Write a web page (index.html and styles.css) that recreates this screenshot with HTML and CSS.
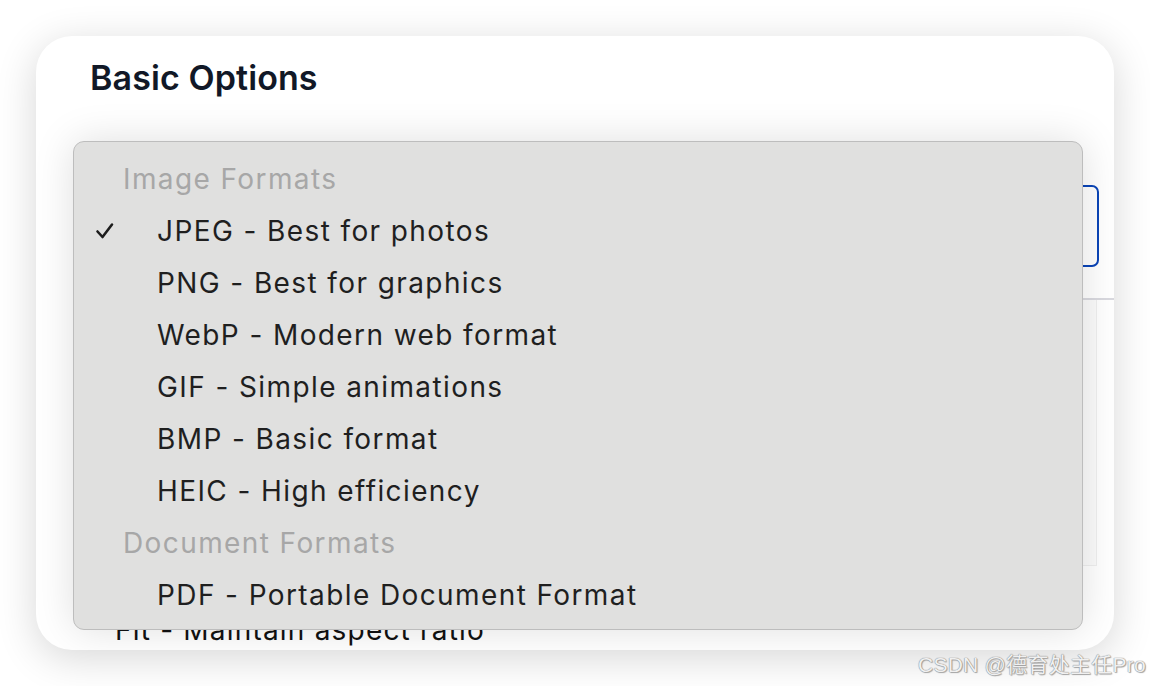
FILE: index.html
```html
<!DOCTYPE html>
<html>
<head>
<meta charset="utf-8">
<link rel="stylesheet" href="styles.css">
</head>
<body>
<div class="card">
  <h2 class="title">Basic Options</h2>
  <div class="select"></div>
  <div class="divider"></div>
  <div class="panel"></div>
  <div class="fit">Fit - Maintain aspect ratio</div>

  <div class="menu">
    <div class="group">Image Formats</div>
    <div class="item"><span class="check"><svg width="20" height="18" viewBox="0 0 20 18"><path d="M2.5 9.5 L7.5 15 L17 2.5" fill="none" stroke="#1d1d1d" stroke-width="2.6" stroke-linecap="round" stroke-linejoin="round"/></svg></span>JPEG - Best for photos</div>
    <div class="item">PNG - Best for graphics</div>
    <div class="item">WebP - Modern web format</div>
    <div class="item">GIF - Simple animations</div>
    <div class="item">BMP - Basic format</div>
    <div class="item">HEIC - High efficiency</div>
    <div class="group">Document Formats</div>
    <div class="item">PDF - Portable Document Format</div>
  </div>
</div>
<div class="watermark">CSDN @德育处主任Pro</div>
</body>
</html>
```

FILE: styles.css
```css
html, body {
  margin: 0;
  padding: 0;
  background: #ffffff;
  width: 1150px;
  height: 686px;
  overflow: hidden;
  font-family: Inter, "Noto Sans", sans-serif;
}

.card {
  position: relative;
  margin: 36px 0 0 36px;
  width: 1078px;
  height: 614px;
  border-radius: 36px;
  background: #ffffff;
  box-shadow: 0 8px 40px rgba(0, 0, 0, 0.16);
  overflow: hidden;
  box-sizing: border-box;
  padding: 22px 15px 0 52px;
}

.title {
  margin: 0 0 0 2px;
  font-size: 34px;
  font-weight: 600;
  color: #111827;
  letter-spacing: 0.1px;
  line-height: 40px;
}

.select {
  margin: 87px 0 0 0;
  height: 78px;
  border: 2px solid #0b45b8;
  border-radius: 7px;
}

.divider {
  margin: 31px -15px 0 0;
  height: 2px;
  background: #d9d9df;
}

.panel {
  margin: 0 2px 0 0;
  height: 265px;
  border: 1px solid #efefef;
  border-top: none;
  background: #fbfbfb;
}

.fit {
  margin: 46px 0 0 27px;
  font-size: 28px;
  letter-spacing: 1.2px;
  color: #111;
  line-height: 36px;
}

.menu {
  position: absolute;
  left: 37px;
  top: 105px;
  width: 1010px;
  height: 489px;
  box-sizing: border-box;
  padding-top: 11px;
  background: #e0e0df;
  border: 1px solid #bdbdbd;
  border-radius: 11px;
  box-shadow: 0 0 40px rgba(0, 0, 0, 0.13);
}

.group, .item {
  height: 52px;
  line-height: 52px;
  font-size: 28px;
  letter-spacing: 1.4px;
  white-space: nowrap;
}

.group {
  padding-left: 49px;
  color: #a7a7a7;
}

.item {
  position: relative;
  padding-left: 83px;
  color: #1f1f1f;
}

.check {
  position: absolute;
  left: 21px;
  top: 17px;
  width: 20px;
  height: 18px;
  line-height: 0;
}

.watermark {
  position: absolute;
  left: 918px;
  top: 651px;
  font-size: 21px;
  line-height: 28px;
  letter-spacing: 0.25px;
  color: #f0f0f0;
  font-family: "Liberation Sans", "Noto Sans CJK SC", sans-serif;
  text-shadow: 0 0 1px #888, 0 0 1px #888, 1px 1px 1px #aaa;
}
```
